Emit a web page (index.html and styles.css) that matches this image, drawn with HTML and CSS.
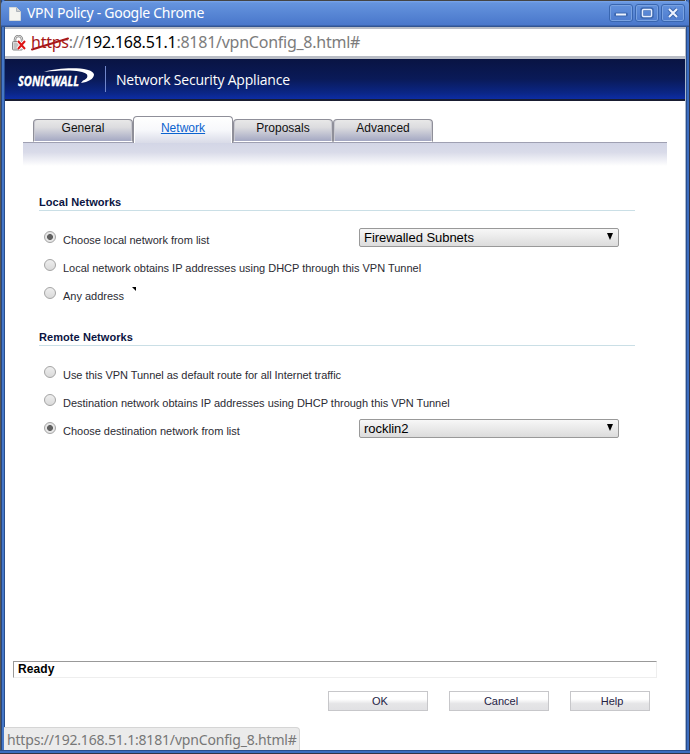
FILE: index.html
```html
<!DOCTYPE html>
<html lang="en">
<head>
<meta charset="utf-8">
<title>VPN Policy</title>
<link rel="stylesheet" href="styles.css">
</head>
<body>
<div class="window">
  <div class="titlebar">
    <svg class="doc" width="12" height="14" viewBox="0 0 12 14"><path d="M.5.5h7l4 4v9H.5z" fill="#f4f4f0" stroke="#d5d8d8"/><path d="M7.5.5v4h4" fill="#d0d2d2" stroke="#aeb4bb"/></svg>
    <span class="title">VPN Policy - Google Chrome</span>
    <div class="controls">
      <span class="control"><svg width="22" height="16"><path d="M6 9.5h10" stroke="#3d68b0" stroke-width="4" stroke-linecap="round"/><path d="M6 9.500h10" stroke="#eef4ff" stroke-width="2"/></svg></span>
      <span class="control"><svg width="22" height="16"><rect x="6" y="4" width="10" height="8" rx="1" fill="none" stroke="#3d68b0" stroke-width="3.500"/><rect x="6.500" y="4.500" width="9" height="7" rx="1" fill="none" stroke="#e5eeff" stroke-width="1.500"/></svg></span>
      <span class="control"><svg width="22" height="16"><path d="M7 4l8 8m0-8l-8 8" stroke="#3d68b0" stroke-width="4"/><path d="M7 4l8 8m0-8l-8 8" stroke="#eef4ff" stroke-width="2"/></svg></span>
    </div>
  </div>
  <div class="address">
    <svg class="lock" width="15" height="16" viewBox="0 0 15 16"><path d="M3 8V4.500a3.500 3.500 0 0 1 7 0V7" fill="none" stroke="#888" stroke-width="2.500"/><path d="M3 8V4.500a3.500 3.500 0 0 1 7 0V7" fill="none" stroke="#ddd"/><rect x=".5" y="6.500" width="10" height="8.500" rx="1" fill="#d8d8d8" stroke="#888"/><path d="M2 9h6M2 11h6M2 13h6" stroke="#aaa"/><path d="M6 6l7 8m0-8l-7 8" stroke="#fff" stroke-width="4"/><path d="M6 6l7 8m0-8l-7 8" stroke="#dd1515" stroke-width="2"/></svg>
    <span class="url"><span class="scheme">https<svg class="strike" width="39" height="14"><path d="M1 12.500L37 1.500" stroke="#a81818" stroke-width="2" stroke-linecap="round"/></svg></span>://<span class="host">192.168.51.1</span>:8181/vpnConfig_8.html#</span>
  </div>
  <header class="brand">
    <svg class="logo" width="78" height="22" viewBox="0 0 78 22"><text x="0" y="18" textLength="61" lengthAdjust="spacingAndGlyphs" class="logo-text">SONICWALL</text><path d="M26 4C42-1 75-1.500 76 6.500C76 11 70 14 63 15L65 12.500C69 11 70 9 69 6.500C65 2 46 1.500 26 4Z" fill="#fff"/></svg>
    <span class="divider"></span>
    <span class="product">Network Security Appliance</span>
  </header>
  <main class="page">
    <nav class="tabs">
      <a class="tab">General</a><a class="tab active"><span>Network</span></a><a class="tab">Proposals</a><a class="tab">Advanced</a>
    </nav>
    <div class="shade"></div>
    <section class="group">
      <h2>Local Networks</h2>
      <div class="row"><i class="radio on"></i><span class="label">Choose local network from list</span><div class="select"><span>Firewalled Subnets</span><i class="arrow"></i></div></div>
      <div class="row"><i class="radio"></i><span class="label">Local network obtains IP addresses using DHCP through this VPN Tunnel</span></div>
      <div class="row"><i class="radio"></i><span class="label">Any address</span><svg class="hint" width="5" height="5"><path d="M0 0h4v4z" fill="#000"/></svg></div>
    </section>
    <section class="group">
      <h2>Remote Networks</h2>
      <div class="row"><i class="radio"></i><span class="label tight">Use this VPN Tunnel as default route for all Internet traffic</span></div>
      <div class="row"><i class="radio"></i><span class="label">Destination network obtains IP addresses using DHCP through this VPN Tunnel</span></div>
      <div class="row"><i class="radio on"></i><span class="label">Choose destination network from list</span><div class="select"><span>rocklin2</span><i class="arrow"></i></div></div>
    </section>
    <div class="ready">Ready</div>
    <div class="buttons"><button>OK</button><button>Cancel</button><button class="small">Help</button></div>
  </main>
  <div class="bubble">https://192.168.51.1:8181/vpnConfig_8.html#</div>
</div>
</body>
</html>
```
FILE: styles.css
```css
* { box-sizing: border-box; }
body { margin: 0; background: #444; font-family: "Liberation Sans", sans-serif; overflow: hidden; }
.window {
  position: relative; display: flex; flex-direction: column;
  width: 690px; height: 754px; padding: 1px 4px 4px 5px;
  background: linear-gradient(90deg, #555 0 1px, #29477e 1px 2px, #4477c8 2px 4px, #294d8c 4px 5px, transparent 5px 685px, #a9b8ce 685px 686px, #294d8c 686px 687px, #3b6dc0 687px 689px, #334 689px) 0 0 / 100% 750px no-repeat,
    linear-gradient(#294d8c 0 1px, #3b6dc0 1px 3px, #334 3px) 0 750px / 100% 4px no-repeat;
}
.titlebar {
  display: flex; align-items: center; flex: none; height: 26px;
  margin: 0 -3px 0 -4px; padding: 0 4px 0 8px;
  background: linear-gradient(#7aa6eb, #6594de 2px, #4977cb 24px, #315492 25px);
  border-radius: 4px 4px 0 0;
}
.doc { margin-right: 6px; margin-top: -1px; }
.title { font: 14px/20px "Noto Sans", sans-serif; color: #fff; letter-spacing: -.28px; white-space: nowrap; margin-top: -2px; }
.controls { display: flex; gap: 2px; margin-left: auto; margin-top: -3px; }
.control { display: flex; width: 24px; height: 18px; border: 1px solid #3966b0; border-radius: 3px; box-shadow: inset 0 0 0 1px #79a2e1; }
.address {
  display: flex; align-items: center; flex: none; height: 32px; padding: 0 7px;
  background: #fff; border: solid #b9bdc6; border-width: 2px 1px 3px 0;
}
.lock { margin-right: 4px; }
.url { font: 16px/24px "Noto Sans", sans-serif; color: #7c7c7c; white-space: nowrap; letter-spacing: -.25px; margin-top: -1px; }
.scheme { position: relative; color: #a81818; }
.strike { position: absolute; left: 0; top: 6px; }
.host { color: #000; }
.brand {
  display: flex; align-items: center; flex: none; height: 42px; width: 680px; padding-left: 13px;
  background: linear-gradient(#091443, #0a1a58 50%, #0b2686 85%, #0d2da5); border-bottom: 2px solid #191d32;
}
.logo { overflow: visible; }
.logo-text { font: italic bold 15px "Open Sans", sans-serif; fill: #fff; stroke: #fff; stroke-width: .4px; }
.divider { width: 1px; height: 26px; margin-left: 9px; background: #7186ca; }
.product { margin: 1px 0 0 10px; font: 14px/20px "Open Sans", sans-serif; color: #fff; letter-spacing: -.2px; white-space: nowrap; }
.page { display: flex; flex-direction: column; flex: 1; width: 680px; padding-top: 15px; background: #fff; }
.tabs { display: flex; align-items: flex-end; height: 26px; margin: 0 18px; padding-left: 10px; }
.tab {
  width: 100px; height: 23px; border: 1px solid #8f8f99; border-bottom: 1px solid #fff; border-radius: 4px 4px 0 0;
  background: linear-gradient(#e8e8e8, #dcdcdf 35%, #a4a8c3); box-shadow: inset 1px 0 #c8c8d0, inset -1px 0 #c8c8d0;
  font-size: 12px; line-height: 17px; text-align: center; color: #111; letter-spacing: .03px;
}
.active { position: relative; height: 27px; margin-bottom: -1px; line-height: 23px; border-bottom: 0; background: linear-gradient(#fff, #f7f8fb 50%, #d9dbe8); color: #0b63cf; box-shadow: inset 1px 0 #fff, inset -1px 0 #fff; text-decoration: underline; }
.shade { width: 644px; height: 24px; margin-left: 18px; border-top: 1px solid #9fa0b2; background: linear-gradient(#d3d6e6, #d9dbe9 40%, #fff); }
.group { width: 596px; margin-left: 34px; height: 135px; padding-top: 29px; }
.group h2 { margin: 0; height: 16px; border-bottom: 1px solid #cadfe6; font-size: 11px; line-height: 14px; color: #0b1442; letter-spacing: .07px; }
.row { position: relative; display: flex; align-items: center; height: 28px; }
h2 + .row { margin-top: 12px; }
.radio { width: 12px; height: 12px; margin: 0 7px 0 5px; border: 1px solid #a4a4a4; border-radius: 50%; background: linear-gradient(#eee, #dadada); }
.radio.on { background: radial-gradient(circle, #606060 0 2.600px, #e6e6e6 3.300px); }
.label { font-size: 11px; line-height: 14px; color: #2b2b33; white-space: nowrap; margin-top: 6px; letter-spacing: -.015px; }
.tight { letter-spacing: -.04px; }
.select {
  display: flex; align-items: center; justify-content: space-between; width: 260px; height: 19px;
  margin-left: auto; margin-right: 16px; padding: 0 5px 0 4px; border: 1px solid #999; border-radius: 2px;
  background: linear-gradient(#f7f7f7, #dcdcdc); font-size: 13px; line-height: 17px; color: #000; letter-spacing: -.04px;
}
.arrow { border: solid transparent; border-width: 7px 3.500px 0; border-top-color: #000; margin-top: -1px; }
.hint { margin: -7px 0 0 8px; }
.ready { width: 644px; height: 17px; margin: 225px 0 0 8px; padding-left: 4px; border: 1px solid #eee; border-top-color: #999; border-left-color: #999; font-size: 12px; font-weight: bold; line-height: 14px; letter-spacing: .1px; }
.buttons { display: flex; gap: 21px; margin: 13px 0 0 323px; }
button { width: 100px; height: 20px; padding: 0 0 0 4px; border: 1px solid #c7c7ca; background: linear-gradient(#fff 0 40%, #e5e5e7 65%, #e1e1e4); font: 11px/18px "Liberation Sans", sans-serif; color: #252345; }
button.small { width: 80px; }
.bubble { position: absolute; left: 4px; bottom: 4px; width: 296px; height: 23px; padding-left: 3px; border: 1px solid #d5d5d5; border-left: 0; border-bottom: 0; border-radius: 0 4px 0 0; background: #ebebeb; font: 14px/23px "Noto Sans", sans-serif; color: #777; letter-spacing: -.18px; white-space: nowrap; }
```
